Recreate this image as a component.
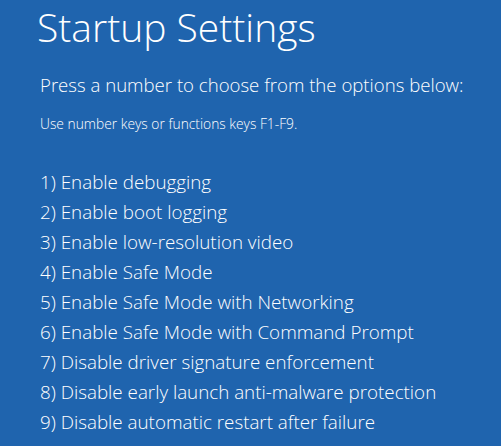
const options = [
  "Enable debugging",
  "Enable boot logging",
  "Enable low-resolution video",
  "Enable Safe Mode",
  "Enable Safe Mode with Networking",
  "Enable Safe Mode with Command Prompt",
  "Disable driver signature enforcement",
  "Disable early launch anti-malware protection",
  "Disable automatic restart after failure",
];

export default function App() {
  return (
    <div
      className="w-[501px] h-[446px] overflow-hidden bg-[#1f64ae] text-white"
      style={{ fontFamily: '"Open Sans", "Noto Sans", sans-serif' }}
    >
      <div className="pl-[37px] pt-[2px]">
        <h1 className="text-[39px] leading-[50px] font-light">Startup Settings</h1>
      </div>
      <div className="pl-[40px] pt-[20px]">
        <p className="text-[18.6px] leading-[26px] font-light">
          Press a number to choose from the options below:
        </p>
        <p className="mt-[16px] text-[13.8px] leading-[20px] font-light">
          Use number keys or functions keys F1-F9.
        </p>
        <ul className="mt-[33px]">
          {options.map((option, i) => (
            <li key={option} className="text-[18.8px] leading-[30px] font-light">
              {i + 1}) {option}
            </li>
          ))}
        </ul>
      </div>
    </div>
  );
}
